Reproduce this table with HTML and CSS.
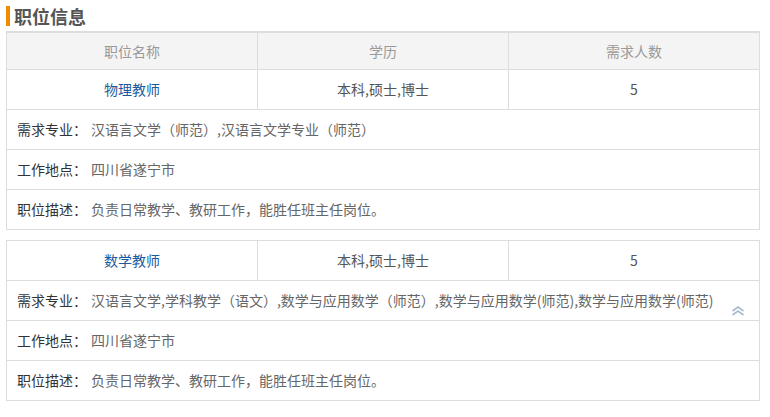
FILE: index.html
```html
<!DOCTYPE html>
<html lang="zh-CN">
<head>
<meta charset="utf-8">
<link rel="stylesheet" href="styles.css">
</head>
<body>
<div class="page">
  <h2 class="title">职位信息</h2>

  <div class="job job-first">
    <div class="row head">
      <div class="cell">职位名称</div>
      <div class="cell">学历</div>
      <div class="cell">需求人数</div>
    </div>
    <div class="row main">
      <div class="cell name">物理教师</div>
      <div class="cell">本科,硕士,博士</div>
      <div class="cell">5</div>
    </div>
    <div class="info"><span class="label">需求专业：</span><span class="value">汉语言文学（师范）,汉语言文学专业（师范）</span></div>
    <div class="info"><span class="label">工作地点：</span><span class="value">四川省遂宁市</span></div>
    <div class="info"><span class="label">职位描述：</span><span class="value">负责日常教学、教研工作，能胜任班主任岗位。</span></div>
  </div>

  <div class="job">
    <div class="row main">
      <div class="cell name">数学教师</div>
      <div class="cell">本科,硕士,博士</div>
      <div class="cell">5</div>
    </div>
    <div class="info info-more"><span class="label">需求专业：</span><span class="value">汉语言文学,学科教学（语文）,数学与应用数学（师范）,数学与应用数学(师范),数学与应用数学(师范)</span>
      <svg class="fold" width="14" height="10" viewBox="0 0 14 10"><path d="M1.5 5 L7 1 L12.5 5 M1.5 9 L7 5 L12.5 9" fill="none" stroke="#a9bccf" stroke-width="1.6"/></svg>
    </div>
    <div class="info"><span class="label">工作地点：</span><span class="value">四川省遂宁市</span></div>
    <div class="info"><span class="label">职位描述：</span><span class="value">负责日常教学、教研工作，能胜任班主任岗位。</span></div>
  </div>
</div>
</body>
</html>
```

FILE: styles.css
```css
* { box-sizing: border-box; }
html, body { margin: 0; padding: 0; background: #fff; }
body {
  font-family: "Microsoft YaHei", "Noto Sans CJK SC", sans-serif;
  font-size: 14px;
  color: #333;
}
.page {
  width: 760px;
  padding: 5px 0 0 6px;
}
.title {
  margin: 0;
  height: 20px;
  line-height: 20px;
  font-size: 18px;
  font-weight: bold;
  color: #555;
  padding-left: 4px;
  border-left: 4px solid #f08a00;
  margin-top: 1px;
}
.job {
  margin-top: 6px;
  width: 754px;
  border: 1px solid #ddd;
}
.job-first {
  border-top-width: 2px;
  margin-top: 5px;
  margin-bottom: 10px;
}
.row {
  display: grid;
  grid-template-columns: 250px 251px 1fr;
}
.row .cell {
  text-align: center;
  border-left: 1px solid #ddd;
  display: flex;
  align-items: center;
  justify-content: center;
  color: #555;
  padding-bottom: 1px;
}
.row .cell:first-child { border-left: none; }
.head {
  height: 37px;
  background: #f4f4f4;
  border-bottom: 1px solid #ddd;
}
.head .cell { color: #999; }
.main {
  height: 40px;
  border-bottom: 1px solid #ddd;
}
.main .name { color: #1a5aa0; }
.info {
  position: relative;
  height: 40px;
  display: flex;
  align-items: center;
  padding-left: 10px;
  padding-bottom: 1px;
  border-bottom: 1px solid #ddd;
  white-space: nowrap;
}
.info:last-child { border-bottom: none; height: 39px; }
.label { color: #333; margin-right: 4px; }
.value { color: #666; }
.info-more { align-items: flex-start; padding-top: 9px; }
.fold {
  position: absolute;
  right: 14px;
  bottom: 4px;
}
```
